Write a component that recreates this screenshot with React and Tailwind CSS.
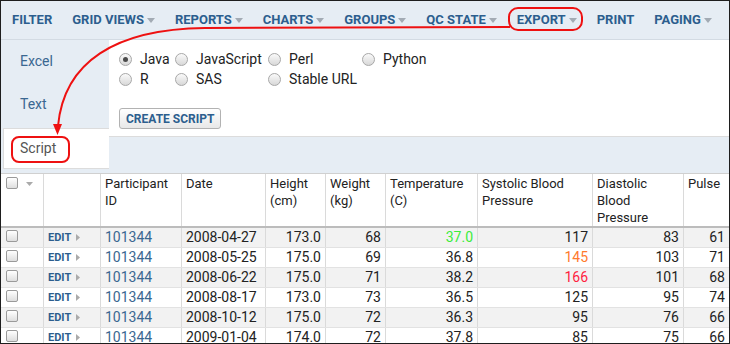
const menu = [
  { label: "FILTER" },
  { label: "GRID VIEWS", caret: true },
  { label: "REPORTS", caret: true },
  { label: "CHARTS", caret: true },
  { label: "GROUPS", caret: true },
  { label: "QC STATE", caret: true },
  { label: "EXPORT", caret: true },
  { label: "PRINT" },
  { label: "PAGING", caret: true },
]

const langs = [
  { label: "Java", checked: true },
  { label: "JavaScript" },
  { label: "Perl" },
  { label: "Python" },
  { label: "R" },
  { label: "SAS" },
  { label: "Stable URL" },
]

const cols = "grid grid-cols-[43px_57px_81px_84px_60px_60px_92px_115px_91px_45px]"

const rows = [
  ["2008-04-27", "173.0", "68", "37.0", "117", "83", "61"],
  ["2008-05-25", "175.0", "69", "36.8", "145", "103", "71"],
  ["2008-06-22", "175.0", "71", "38.2", "166", "101", "68"],
  ["2008-08-17", "173.0", "73", "36.5", "125", "95", "74"],
  ["2008-10-12", "175.0", "72", "36.3", "95", "76", "66"],
  ["2009-01-04", "174.0", "72", "37.8", "85", "75", "66"],
]

function Caret() {
  return (
    <svg width="8" height="5" viewBox="0 0 8 5" className="ml-[3px] shrink-0">
      <path d="M0 0h8L4 5z" fill="#a3abb4" />
    </svg>
  )
}

function Checkbox() {
  return (
    <span className="block w-[12px] h-[12px] rounded-[2px] border border-[#9a9a9a] bg-gradient-to-b from-white to-[#dedede]" />
  )
}

function Radio({ checked }) {
  return (
    <span className="flex items-center justify-center w-[13px] h-[13px] rounded-full border border-[#a8a8a8] bg-gradient-to-b from-[#fafafa] to-[#d8d8d8] shrink-0">
      {checked && <span className="w-[5px] h-[5px] rounded-full bg-[#4a4a4a]" />}
    </span>
  )
}

function Cell({ children, right, className = "" }) {
  return (
    <div className={`border-r border-[#dadada] px-[4px] ${right ? "text-right" : ""} ${className}`}>
      {children}
    </div>
  )
}

export default function App() {
  return (
    <div className="relative w-[730px] h-[344px] overflow-hidden border border-[#1e1e1e] bg-white font-['Roboto',sans-serif]">

      {/* Toolbar */}
      <div className="h-[39px] bg-[#e6edf4] border-b border-[#d3dbe3] flex items-center pl-[11px] gap-[20px] whitespace-nowrap">
        {menu.map(m => (
          <div key={m.label} className="flex items-center shrink-0 text-[13px] font-bold text-[#2c5e8e]">
            {m.label}
            {m.caret && <Caret />}
          </div>
        ))}
      </div>

      {/* Export panel */}
      <div className="flex h-[133px]">
        <div className="w-[108px] bg-[#e6edf4] flex flex-col text-[14px]">
          <div className="h-[42px] flex items-center pl-[19px] text-[#3a6791]">Excel</div>
          <div className="h-[44px] flex items-center pl-[19px] text-[#3a6791]">Text</div>
          <div className="mt-[2px] ml-[2px] h-[41px] flex items-center pl-[16px] bg-white border border-r-0 border-[#dcdcdc] text-[#555]">
            Script
          </div>
        </div>
        <div className="flex-1 flex flex-col">
          <div className="h-[97px] bg-white border-b border-[#dcdcdc] pl-[10px] pt-[9px]">
            <div className="grid grid-cols-[56px_93px_94px_auto] text-[14px] text-[#222]">
              {langs.map(l => (
                <div key={l.label} className="h-[20px] flex items-center gap-[8px]">
                  <Radio checked={l.checked} />
                  <span>{l.label}</span>
                </div>
              ))}
            </div>
            <button className="mt-[19px] h-[21px] px-[6px] rounded-[3px] border border-[#b2b2b2] bg-gradient-to-b from-white to-[#e8e8e8] text-[12px] font-bold text-[#2c5e8e] leading-none">
              CREATE SCRIPT
            </button>
          </div>
          <div className="flex-1 bg-[#e6edf4]" />
        </div>
      </div>

      {/* Grid */}
      <div className="border-t border-[#d0d0d0]">
        <div className={`${cols} h-[54px] border-b-2 border-[#bcbcbc] text-[13px] leading-[17px] text-[#222]`}>
          <Cell className="flex items-start pt-[3px] pl-[5px] gap-[8px]">
            <Checkbox />
            <svg width="7" height="4" viewBox="0 0 7 4" className="mt-[5px]">
              <path d="M0 0h7L3.5 4z" fill="#aaa" />
            </svg>
          </Cell>
          <Cell />
          <Cell className="pt-[1px]">Participant ID</Cell>
          <Cell className="pt-[1px]">Date</Cell>
          <Cell className="pt-[1px]">Height (cm)</Cell>
          <Cell className="pt-[1px]">Weight (kg)</Cell>
          <Cell className="pt-[1px]">Temperature (C)</Cell>
          <Cell className="pt-[1px]">Systolic Blood Pressure</Cell>
          <Cell className="pt-[1px]">Diastolic Blood Pressure</Cell>
          <Cell className="pt-[1px] border-r-0">Pulse</Cell>
        </div>
        {rows.map((r, i) => (
          <div
            key={i}
            className={`${cols} h-[20px] border-b border-[#e2e2e2] text-[14px] leading-[18px] text-[#222] ${i % 2 === 0 ? "bg-[#f2f2f2]" : "bg-white"}`}
          >
            <Cell className="pl-[5px] pt-[2px]"><Checkbox /></Cell>
            <Cell className="flex items-center gap-[5px] pl-[4px]">
              <span className="text-[11px] font-bold text-[#2c5e8e]">EDIT</span>
              <svg width="4" height="7" viewBox="0 0 4 7"><path d="M0 0L4 3.5L0 7z" fill="#aaa" /></svg>
            </Cell>
            <Cell className="text-[#3a6791]">101344</Cell>
            <Cell>{r[0]}</Cell>
            <Cell right>{r[1]}</Cell>
            <Cell right>{r[2]}</Cell>
            <Cell right className={i === 0 ? "text-[#3cec3c]" : ""}>{r[3]}</Cell>
            <Cell right className={i === 1 ? "text-[#ff7a2e]" : i === 2 ? "text-[#ff1f3f]" : ""}>{r[4]}</Cell>
            <Cell right>{r[5]}</Cell>
            <Cell right className="border-r-0">{r[6]}</Cell>
          </div>
        ))}
      </div>

      {/* Red callout annotation */}
      <svg className="absolute left-[-1px] top-[-1px] pointer-events-none" width="730" height="344" viewBox="0 0 730 344" fill="none">
        <rect x="509" y="8" width="73" height="22" rx="9" stroke="#ee1111" strokeWidth="2" />
        <path d="M510 27 L205 28 C115 29 64 62 58 126" stroke="#ee1111" strokeWidth="2" />
        <path d="M53 124 L62 124 L57.5 135 z" fill="#ee1111" />
        <rect x="12" y="137" width="57" height="25" rx="7" stroke="#ee1111" strokeWidth="2" />
      </svg>
    </div>
  )
}
